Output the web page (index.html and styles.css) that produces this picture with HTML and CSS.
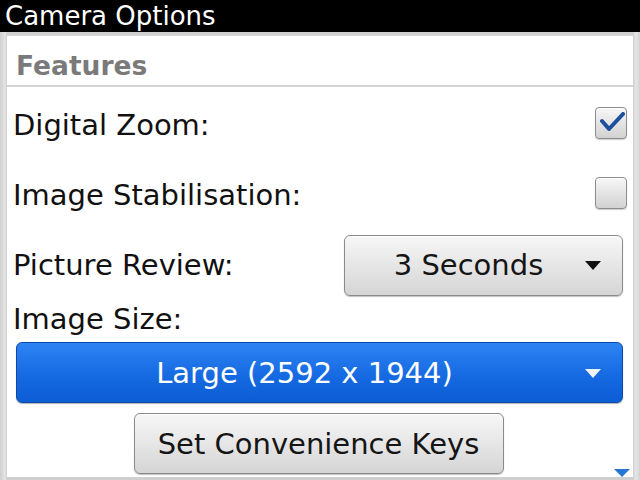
FILE: index.html
```html
<!DOCTYPE html>
<html lang="en">
<head>
    <meta charset="UTF-8">
    <meta name="viewport" content="width=device-width, initial-scale=1.0">
    <title>Camera Options</title>
    <link rel="stylesheet" href="styles.css">
</head>
<body>
    <div class="title-bar">Camera Options</div>
    <div class="frame">
        <div class="panel">
            <div class="section-header">Features</div>

            <div class="option-list">
                <div class="option-row">
                    <span class="option-label">Digital Zoom:</span>
                    <span class="checkbox checked">
                        <svg width="26" height="22" viewBox="0 0 26 22">
                            <path d="M3 9 L10 17 L24 2" fill="none" stroke="#1c4f9c" stroke-width="4" stroke-linejoin="round" stroke-linecap="round"/>
                        </svg>
                    </span>
                </div>

                <div class="option-row">
                    <span class="option-label">Image Stabilisation:</span>
                    <span class="checkbox"></span>
                </div>

                <div class="option-row">
                    <span class="option-label">Picture Review:</span>
                    <div class="dropdown small">
                        <span class="dropdown-value">3 Seconds</span>
                        <span class="dropdown-arrow"></span>
                    </div>
                </div>

                <div class="option-label size-label">Image Size:</div>
                <div class="dropdown wide selected">
                    <span class="dropdown-value">Large (2592 x 1944)</span>
                    <span class="dropdown-arrow"></span>
                </div>

                <div class="button-row">
                    <button class="keys-button">Set Convenience Keys</button>
                </div>
            </div>

            <span class="scroll-arrow"></span>
        </div>
    </div>
</body>
</html>
```
FILE: styles.css
```css
/* Page */
body {
    margin: 0;
    width: 640px;
    height: 480px;
    overflow: hidden;
    background: #000;
    font-family: 'DejaVu Sans', 'Liberation Sans', sans-serif;
    color: #111;
}

/* Title bar */
.title-bar {
    height: 32px;
    line-height: 32px;
    padding-left: 5px;
    font-size: 26px;
    color: #fff;
    background: #000;
}

/* Grey frame around the screen */
.frame {
    height: 448px;
    box-sizing: border-box;
    padding: 3px 7px 3px 7px;
    background: linear-gradient(90deg, #cfcfcf 0, #e4e4e4 5px, #cfcfcf 7px, #cfcfcf 633px, #e6e6e6 636px, #d2d2d2 640px);
}

.panel {
    position: relative;
    height: 100%;
    background: #fff;
    border-top: 1px solid #d6d6d6;
    box-sizing: border-box;
}

/* Section header */
.section-header {
    height: 51px;
    box-sizing: border-box;
    padding: 8px 0 0 9px;
    line-height: 43px;
    font-size: 26.5px;
    font-weight: bold;
    color: #7a7a7a;
    border-bottom: 2px solid #d4d4d4;
}

.option-list {
    padding-top: 3px;
    display: flex;
    flex-direction: column;
}

.option-row {
    height: 70px;
    display: flex;
    align-items: center;
    justify-content: space-between;
    padding-left: 6px;
}

.option-label {
    font-size: 29px;
    line-height: 70px;
}

.size-label {
    line-height: 38px;
    padding-left: 6px;
}

/* Checkboxes */
.checkbox {
    width: 32px;
    height: 32px;
    box-sizing: border-box;
    margin-right: 6px;
    margin-top: -4px;
    border: 1px solid #8d8d8d;
    border-radius: 4px;
    background: linear-gradient(#f7f7f7, #d2d2d2);
    box-shadow: inset 0 1px 0 #fff, 0 1px 1px rgba(0, 0, 0, 0.2);
    display: flex;
    align-items: center;
    justify-content: center;
}

.checkbox svg {
    margin-left: 1px;
}

/* Dropdowns */
.dropdown {
    position: relative;
    height: 61px;
    box-sizing: border-box;
    border-radius: 6px;
    display: flex;
    align-items: center;
    padding-right: 30px;
    font-size: 29px;
}

.dropdown-value {
    flex: 1;
    text-align: center;
}

.dropdown.small {
    width: 279px;
    margin-right: 10px;
    height: 61px;
    border: 1px solid #8a8a8a;
    background: linear-gradient(#f7f7f7, #d5d5d5);
    box-shadow: inset 0 1px 0 #fff, 0 1px 1px rgba(0, 0, 0, 0.25);
    color: #151515;
}

.dropdown.wide {
    margin: 4px 10px 0 9px;
}

.dropdown.selected {
    border: 1px solid #0b48aa;
    background: linear-gradient(#2d83f3, #1468e0 60%, #0d5dd4);
    box-shadow: 0 1px 1px rgba(0, 0, 0, 0.3);
    color: #fff;
}

.dropdown-arrow {
    position: absolute;
    right: 21px;
    top: 50%;
    margin-top: -4px;
    width: 0;
    height: 0;
    border-left: 8px solid transparent;
    border-right: 8px solid transparent;
    border-top: 9px solid #111;
}

.dropdown.selected .dropdown-arrow {
    border-top-color: #f0f4fa;
}

/* Convenience keys button */
.button-row {
    display: flex;
    justify-content: center;
    margin-top: 10px;
}

.keys-button {
    width: 370px;
    height: 61px;
    margin-left: -3px;
    font-family: inherit;
    font-size: 29px;
    color: #151515;
    border: 1px solid #8a8a8a;
    border-radius: 6px;
    background: linear-gradient(#f7f7f7, #d5d5d5);
    box-shadow: inset 0 1px 0 #fff, 0 1px 1px rgba(0, 0, 0, 0.25);
    padding: 0;
}

/* More content indicator */
.scroll-arrow {
    position: absolute;
    right: 3px;
    bottom: 0;
    width: 0;
    height: 0;
    border-left: 8px solid transparent;
    border-right: 8px solid transparent;
    border-top: 8px solid #2677d3;
}
```
